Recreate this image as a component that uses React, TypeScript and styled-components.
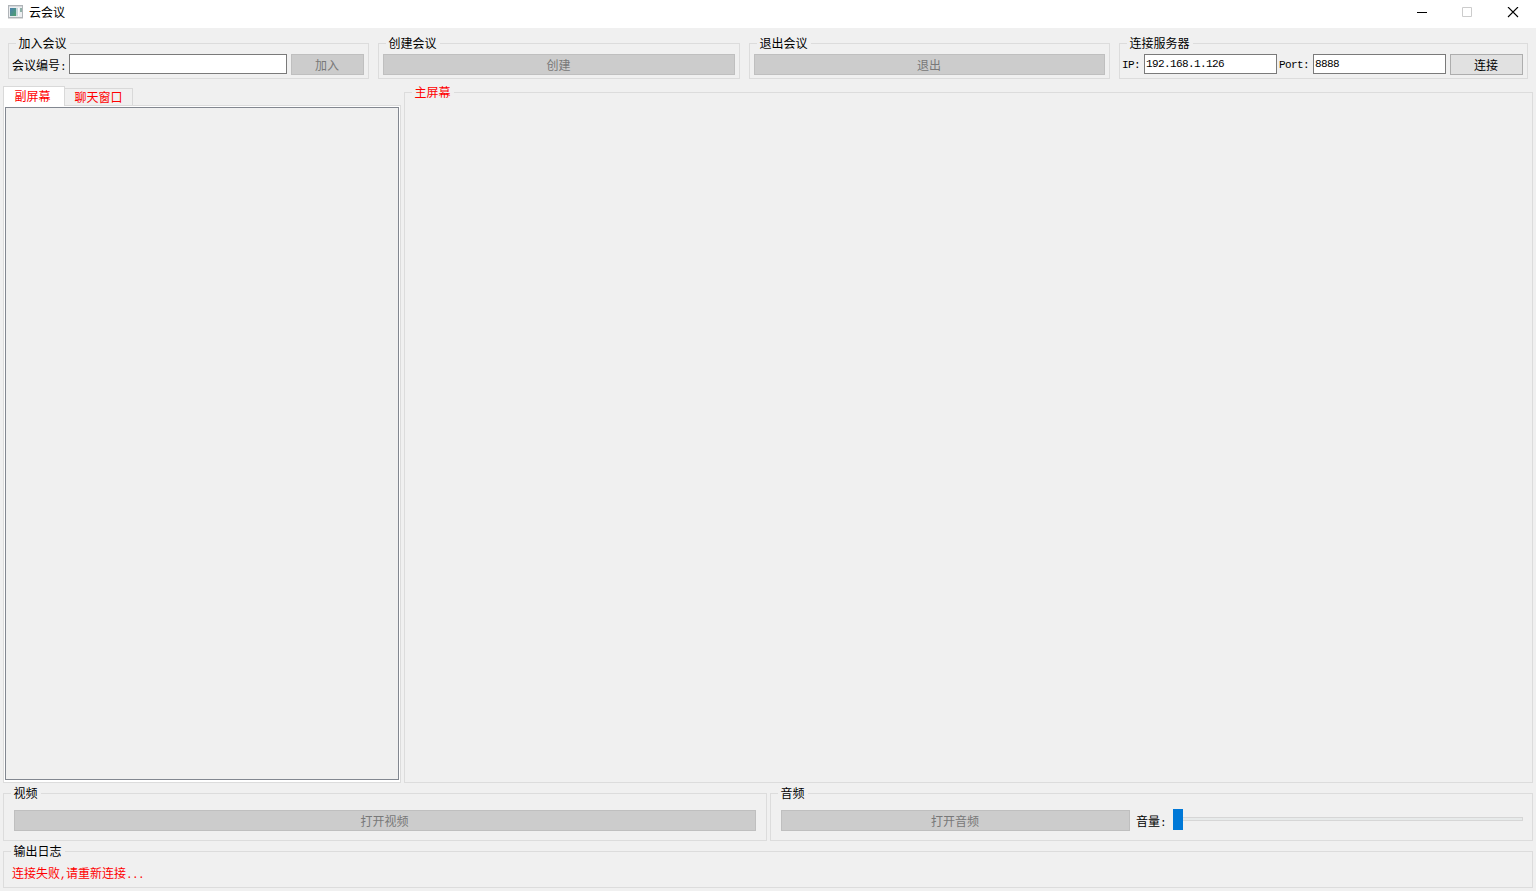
import React from "react";
import styled, { createGlobalStyle, css } from "styled-components";

const GlobalStyle = createGlobalStyle`
  * { box-sizing: border-box; }
  html, body { margin: 0; padding: 0; background: #f0f0f0; }
  body, button, input {
    font-family: "Liberation Mono", "Noto Sans CJK SC", monospace;
    font-size: 12px;
    font-weight: 400;
    line-height: 16px;
  }
`;

const Window = styled.div`
  display: flex;
  flex-direction: column;
  width: 1536px;
  height: 891px;
  overflow: hidden;
  background: #f0f0f0;
  color: #000;
`;

const TitleBar = styled.header`
  display: flex;
  align-items: flex-start;
  height: 28px;
  padding: 4px 0 0 8px;
  background: #fff;
`;

const WindowTitle = styled.span`
  flex: 1;
  margin-left: 6px;
  font-family: "Noto Sans CJK SC", sans-serif;
`;

const CaptionButtons = styled.div`
  display: flex;
  gap: 34px;
  padding: 3px 17px 0 0;
`;

const CaptionGlyph = styled.svg`
  display: block;
  width: 12px;
  height: 12px;
`;

const Toolbar = styled.div`
  display: grid;
  grid-template-columns: 361px 362px 361px 409px;
  column-gap: 9px;
  height: 51px;
  padding: 15px 8px 0;
`;

const Frame = styled.section<{ $padding: string }>`
  display: flex;
  flex-direction: column;
  height: 100%;
  padding: ${(p) => p.$padding};
  border: 1px solid #dcdcdc;
`;

const FrameTitle = styled.h2<{ $red?: boolean; $indent: number }>`
  align-self: flex-start;
  flex: none;
  height: 16px;
  margin: -9px 0 0 ${(p) => p.$indent}px;
  padding: 2px 3.5px 0 2.5px;
  background: #f0f0f0;
  font-size: 12px;
  font-weight: 400;
  line-height: 16px;
  color: ${(p) => (p.$red ? "#f00" : "#000")};
`;

const Controls = styled.div<{ $top: number }>`
  display: flex;
  align-items: flex-start;
  margin-top: ${(p) => p.$top}px;
`;

const Label = styled.label<{ $width: number; $shift?: number; $top?: number }>`
  flex: none;
  width: ${(p) => p.$width}px;
  margin: 0 ${(p) => -(p.$shift ?? 0)}px 0 ${(p) => p.$shift ?? 0}px;
  padding-top: ${(p) => p.$top ?? 5}px;
  white-space: nowrap;
`;

const narrow = css`
  font-size: 11px;
  letter-spacing: -0.6px;
`;

const Latin = styled.span`
  ${narrow}
`;

const TextField = styled.input<{ $width: number }>`
  ${narrow}
  width: ${(p) => p.$width}px;
  height: 20px;
  margin-right: 4px;
  padding: 0 1px;
  border: 1px solid #7a7a7a;
  border-radius: 0;
  outline: 0;
  background: #fff;
  color: #000;
`;

const PushButton = styled.button<{ $width?: number }>`
  flex: ${(p) => (p.$width ? "none" : "1")};
  width: ${(p) => (p.$width ? `${p.$width}px` : "auto")};
  height: 21px;
  padding: 5px 1px 0 0;
  border: 1px solid #adadad;
  border-radius: 0;
  background: #e1e1e1;
  color: #000;
  line-height: 14px;

  &:disabled {
    border-color: #bfbfbf;
    background: #ccc;
    color: #787878;
  }
`;

const Workspace = styled.main`
  display: grid;
  grid-template-columns: 398px 1129px;
  column-gap: 3px;
  height: 704px;
  padding: 7px 3px 0;
`;

const SidePanel = styled.div`
  display: flex;
  flex-direction: column;
`;

const TabStrip = styled.div`
  display: flex;
  align-items: flex-end;
  height: 19px;
`;

const Tab = styled.button<{ $active?: boolean }>`
  width: ${(p) => (p.$active ? 62 : 68)}px;
  height: ${(p) => (p.$active ? 20 : 17)}px;
  margin-bottom: ${(p) => (p.$active ? -1 : 0)}px;
  padding: ${(p) => (p.$active ? "2px 3px 0 0" : "3px 0 0")};
  z-index: ${(p) => (p.$active ? 1 : 0)};
  border: 1px solid #d9d9d9;
  border-left-width: ${(p) => (p.$active ? 1 : 0)}px;
  border-bottom: 0;
  background: ${(p) => (p.$active ? "#fff" : "#f0f0f0")};
  color: #f00;
  line-height: 14px;
`;

const TabPane = styled.div`
  flex: 1;
  display: flex;
  padding: 1px 1px 2px;
  border: 1px solid #dcdcdc;
  background: #fff;
`;

const ScreenList = styled.div`
  flex: 1;
  border: 1px solid #828790;
  background: #f0f0f0;
`;

const MainScreen = styled.div`
  padding-top: 6px;
`;

const MediaRow = styled.div`
  display: grid;
  grid-template-columns: 764px 763px;
  column-gap: 3px;
  height: 58px;
  padding: 10px 3px 0;
`;

const Slider = styled.div`
  flex: 1;
  display: flex;
  align-items: center;
  height: 21px;
  margin: -1px 0 0 6px;
`;

const SliderHandle = styled.div`
  width: 10px;
  height: 21px;
  background: #0078d7;
`;

const SliderGroove = styled.div`
  flex: 1;
  height: 4px;
  margin-top: -1px;
  border: 1px solid #d6d6d6;
  border-left: 0;
  background: #e7eaea;
`;

const LogArea = styled.footer`
  height: 47px;
  padding: 10px 3px 0;
`;

const LogMessage = styled.p`
  margin: 8px 0 0 8px;
  color: #f00;
`;

type GroupProps = {
  title: string;
  indent?: number;
  padding?: string;
  red?: boolean;
  children?: React.ReactNode;
};

function GroupBox({ title, indent = 7, padding = "0", red, children }: GroupProps) {
  return (
    <Frame $padding={padding}>
      <FrameTitle $indent={indent} $red={red}>{title}</FrameTitle>
      {children}
    </Frame>
  );
}

const IconSvg = styled.svg`
  display: block;
  width: 15px;
  height: 14px;
  margin-top: 1px;
`;

function AppIcon() {
  return (
    <IconSvg viewBox="0 0 15 14">
      <defs>
        <linearGradient id="screen" x1="0" y1="0" x2="1" y2="1">
          <stop offset="0" stopColor="#4a7fb0" />
          <stop offset="1" stopColor="#4fa06c" />
        </linearGradient>
      </defs>
      <rect x="0.5" y="0.5" width="14" height="12" fill="#eceef0" stroke="#b0b4b8" />
      <rect x="1" y="1" width="13" height="1" fill="#d5d8dc" />
      <rect x="2" y="3" width="6" height="8" fill="url(#screen)" />
      <rect x="8" y="3" width="2" height="8" fill="#c4d6da" />
      <rect x="10" y="3" width="1" height="8" fill="#fafafa" />
      <rect x="12" y="3" width="2" height="4" fill="#8fb0a8" />
      <rect x="0" y="13" width="15" height="1" fill="#dcdcdc" />
    </IconSvg>
  );
}

export default function App() {
  return (
    <Window>
      <GlobalStyle />
      <TitleBar>
        <AppIcon />
        <WindowTitle>云会议</WindowTitle>
        <CaptionButtons>
          <CaptionGlyph viewBox="0 0 12 12"><path d="M2 5.5h10" stroke="#000" /></CaptionGlyph>
          <CaptionGlyph viewBox="0 0 12 12"><path d="M1.5.5h9v9h-9z" fill="none" stroke="#ccc" /></CaptionGlyph>
          <CaptionGlyph viewBox="0 0 12 12"><path d="M1 0l10 10M11 0l-10 10" stroke="#000" strokeWidth="1.1" /></CaptionGlyph>
        </CaptionButtons>
      </TitleBar>

      <Toolbar>
        <GroupBox title="加入会议" padding="0 4px 0 3px" indent={4}>
          <Controls $top={3}>
            <Label $width={57}>会议编号<Latin>:</Latin></Label>
            <TextField $width={218} aria-label="会议编号" />
            <PushButton disabled>加入</PushButton>
          </Controls>
        </GroupBox>
        <GroupBox title="创建会议" padding="0 4px" indent={3}>
          <Controls $top={3}><PushButton disabled>创建</PushButton></Controls>
        </GroupBox>
        <GroupBox title="退出会议" padding="0 4px" indent={3}>
          <Controls $top={3}><PushButton disabled>退出</PushButton></Controls>
        </GroupBox>
        <GroupBox title="连接服务器" padding="0 4px 0 2px" indent={5}>
          <Controls $top={3}>
            <Label $width={22} $top={3}><Latin>IP:</Latin></Label>
            <TextField $width={133} defaultValue="192.168.1.126" aria-label="IP" />
            <Label $width={32} $shift={-2} $top={3}><Latin>Port:</Latin></Label>
            <TextField $width={133} defaultValue="8888" aria-label="Port" />
            <PushButton $width={73}>连接</PushButton>
          </Controls>
        </GroupBox>
      </Toolbar>

      <Workspace>
        <SidePanel>
          <TabStrip>
            <Tab $active>副屏幕</Tab>
            <Tab>聊天窗口</Tab>
          </TabStrip>
          <TabPane><ScreenList /></TabPane>
        </SidePanel>
        <MainScreen>
          <GroupBox title="主屏幕" red />
        </MainScreen>
      </Workspace>

      <MediaRow>
        <GroupBox title="视频" padding="0 10px" indent={-3}>
          <Controls $top={9}><PushButton disabled>打开视频</PushButton></Controls>
        </GroupBox>
        <GroupBox title="音频" padding="0 9px 0 10px" indent={-3}>
          <Controls $top={9}>
            <PushButton $width={349} disabled>打开音频</PushButton>
            <Label $width={37} $shift={6}>音量<Latin>:</Latin></Label>
            <Slider>
              <SliderHandle />
              <SliderGroove />
            </Slider>
          </Controls>
        </GroupBox>
      </MediaRow>

      <LogArea>
        <GroupBox title="输出日志">
          <LogMessage>连接失败<Latin>,</Latin>请重新连接<Latin>...</Latin></LogMessage>
        </GroupBox>
      </LogArea>
    </Window>
  );
}
